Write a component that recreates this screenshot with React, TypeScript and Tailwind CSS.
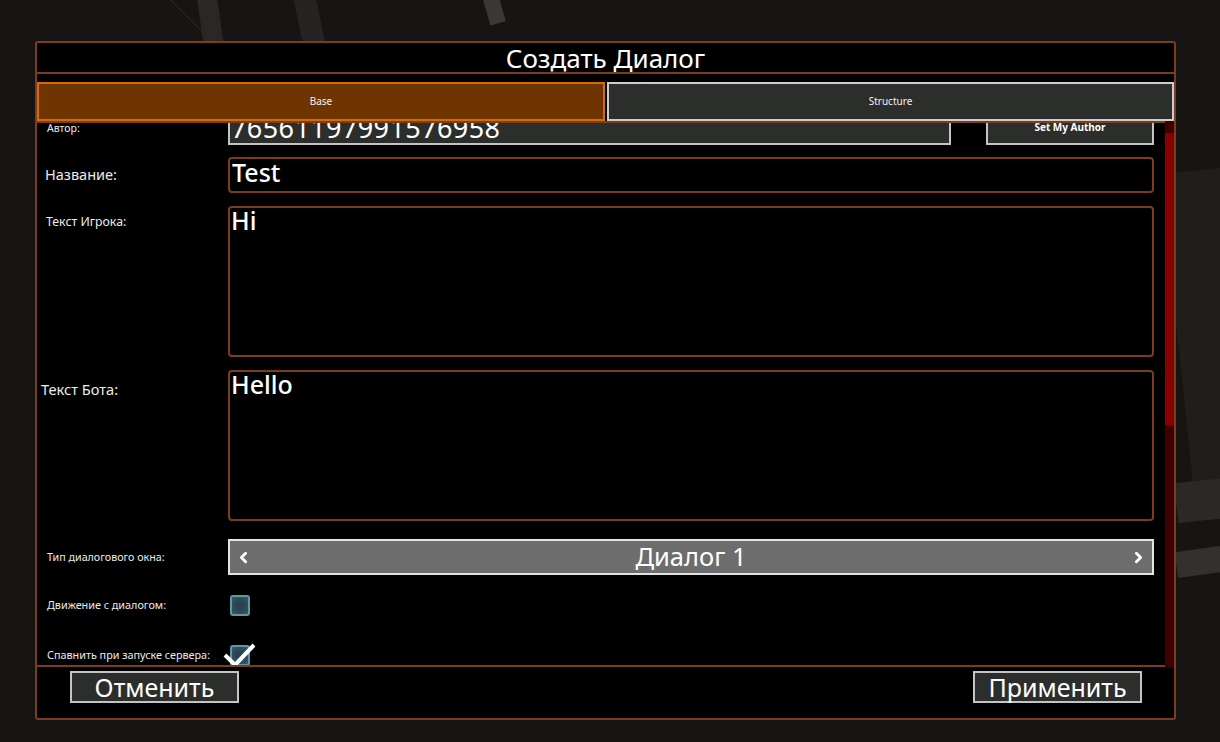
import { ChevronLeft, ChevronRight } from 'lucide-react';

const font = "font-['Noto_Sans',sans-serif]";

function Backdrop() {
  return (
    <div className="pointer-events-none absolute inset-0">
      <div className="absolute left-[200px] top-[-10px] h-[58px] w-[20px] -rotate-[8deg] bg-[#292827]" />
      <div className="absolute left-[298px] top-[-10px] h-[58px] w-[22px] -rotate-[12deg] bg-[#252423]" />
      <div className="absolute left-[486px] top-[-6px] h-[30px] w-[16px] -rotate-[16deg] bg-[#3a3938]" />
      <div className="absolute left-[1178px] top-[170px] h-[340px] w-[60px] -rotate-[6deg] bg-[#1f1e1d]" />
      <div className="absolute left-[1176px] top-[548px] h-[26px] w-[60px] -rotate-[8deg] bg-[#323130]" />
      <div className="absolute left-[1176px] top-[480px] h-[40px] w-[60px] -rotate-[6deg] bg-[#2a2928]" />
      <div className="absolute left-[190px] top-[-110px] h-[260px] w-px -rotate-[45deg] bg-[#3a2418]" />
    </div>
  );
}

function Row({ label, labelClass, className, children }: { label: string; labelClass: string; className: string; children: React.ReactNode }) {
  return (
    <div className={`flex pr-[11px] ${className}`}>
      <div className={`w-[191px] shrink-0 whitespace-nowrap text-[#ececec] ${labelClass}`}>{label}</div>
      <div className="flex flex-1">{children}</div>
    </div>
  );
}

function GreyButton({ children, className }: { children: React.ReactNode; className: string }) {
  return (
    <div className={`flex items-center justify-center border-2 border-[#c4c4c4] bg-[#2c2e2c] text-white ${className}`}>
      {children}
    </div>
  );
}

function Check({ checked }: { checked?: boolean }) {
  return (
    <div className="relative ml-[2px] h-[21px] w-[20px] rounded-[3px] border-2 border-[#5f97a3] bg-[radial-gradient(circle,#2a4150_30%,#3a5968_100%)]">
      {checked && (
        <svg className="absolute left-[-9px] top-[-4px]" width="34" height="26" viewBox="0 0 34 26">
          <polyline points="2,12 12,22 31,2" fill="none" stroke="#fff" strokeWidth="4" />
        </svg>
      )}
    </div>
  );
}

export default function App() {
  return (
    <div className={`relative h-[742px] w-[1220px] overflow-hidden bg-[#161513] pl-[35px] pt-[41px] ${font}`}>
      <Backdrop />
      <div className="relative flex w-[1141px] flex-col rounded-[3px] border-2 border-[#7d3d1c] bg-black">
        <div className="flex h-[31px] items-center justify-center border-b-2 border-[#7d3d1c] text-[26px] leading-none text-white">
          Создать Диалог
        </div>
        <div className="h-[8px]" />
        <div className="flex h-[39px] gap-[2px]">
          <div className="flex w-[568px] items-center justify-center border-2 border-[#d66b00] bg-[#6e3500] text-[10px] text-[#f2f2f2]">
            Base
          </div>
          <div className="flex flex-1 items-center justify-center border-2 border-[#cdcdcd] bg-[#2c2e2c] text-[10px] text-[#f2f2f2]">
            Structure
          </div>
        </div>
        <div className="flex h-[546px]">
          <div className="flex-1 overflow-hidden border-y-2 border-[#7d3d1c]">
            <div className="-mt-[14px] flex flex-col">
              <Row label="Автор:" labelClass="pl-[10px] pt-[14px] text-[10.5px] leading-[11px]" className="h-[36px]">
                <div className="flex w-[723px] items-center overflow-hidden border-2 border-[#c4c4c4] bg-[#2c2e2c] pl-[1px] text-[27px] leading-none tracking-[0.4px] text-white">
                  76561197991576958
                </div>
                <GreyButton className="ml-auto w-[168px] text-[10px] font-bold">Set My Author</GreyButton>
              </Row>
              <Row label="Название:" labelClass="flex items-center pl-[8px] text-[14.5px]" className="mt-[12px] h-[36px]">
                <div className="flex-1 rounded-[4px] border-2 border-[#7d3d1c] px-[2px] text-[25px] font-medium leading-[27px] text-white">
                  Test
                </div>
              </Row>
              <Row label="Текст Игрока:" labelClass="pl-[9px] pt-[7px] text-[12.3px]" className="mt-[13px] h-[151px]">
                <div className="flex-1 rounded-[4px] border-2 border-[#7d3d1c] px-[1px] text-[25px] font-medium leading-[25px] text-white">
                  Hi
                </div>
              </Row>
              <Row label="Текст Бота:" labelClass="pl-[4px] pt-[9px] text-[14.6px]" className="mt-[13px] h-[151px]">
                <div className="flex-1 rounded-[4px] border-2 border-[#7d3d1c] px-[1px] text-[25px] font-medium leading-[25px] text-white">
                  Hello
                </div>
              </Row>
              <Row label="Тип диалогового окна:" labelClass="flex items-center pl-[10px] text-[10.7px]" className="mt-[18px] h-[36px]">
                <div className="flex flex-1 items-center border-2 border-[#e4e4e4] bg-[#6d6d6d] px-[5px] text-white">
                  <ChevronLeft size={17} strokeWidth={4} />
                  <span className="flex-1 text-center text-[25.5px] leading-none">Диалог 1</span>
                  <ChevronRight size={17} strokeWidth={4} />
                </div>
              </Row>
              <Row label="Движение с диалогом:" labelClass="flex items-center pl-[10px] text-[10.8px]" className="mt-[20px] h-[21px]">
                <Check />
              </Row>
              <Row label="Спавнить при запуске сервера:" labelClass="flex items-center pl-[10px] text-[10.8px]" className="mt-[29px] h-[21px]">
                <Check checked />
              </Row>
            </div>
          </div>
          <div className="flex w-[9px] flex-col bg-[#400000]">
            <div className="h-[12px]" />
            <div className="h-[292px] bg-[#8a0000]" />
          </div>
        </div>
        <div className="flex h-[51px] items-start justify-between pl-[33px] pr-[32px] pt-[4px]">
          <GreyButton className="h-[32px] w-[169px] text-[25px] leading-none">Отменить</GreyButton>
          <GreyButton className="h-[32px] w-[169px] text-[25px] leading-none">Применить</GreyButton>
        </div>
      </div>
    </div>
  );
}
